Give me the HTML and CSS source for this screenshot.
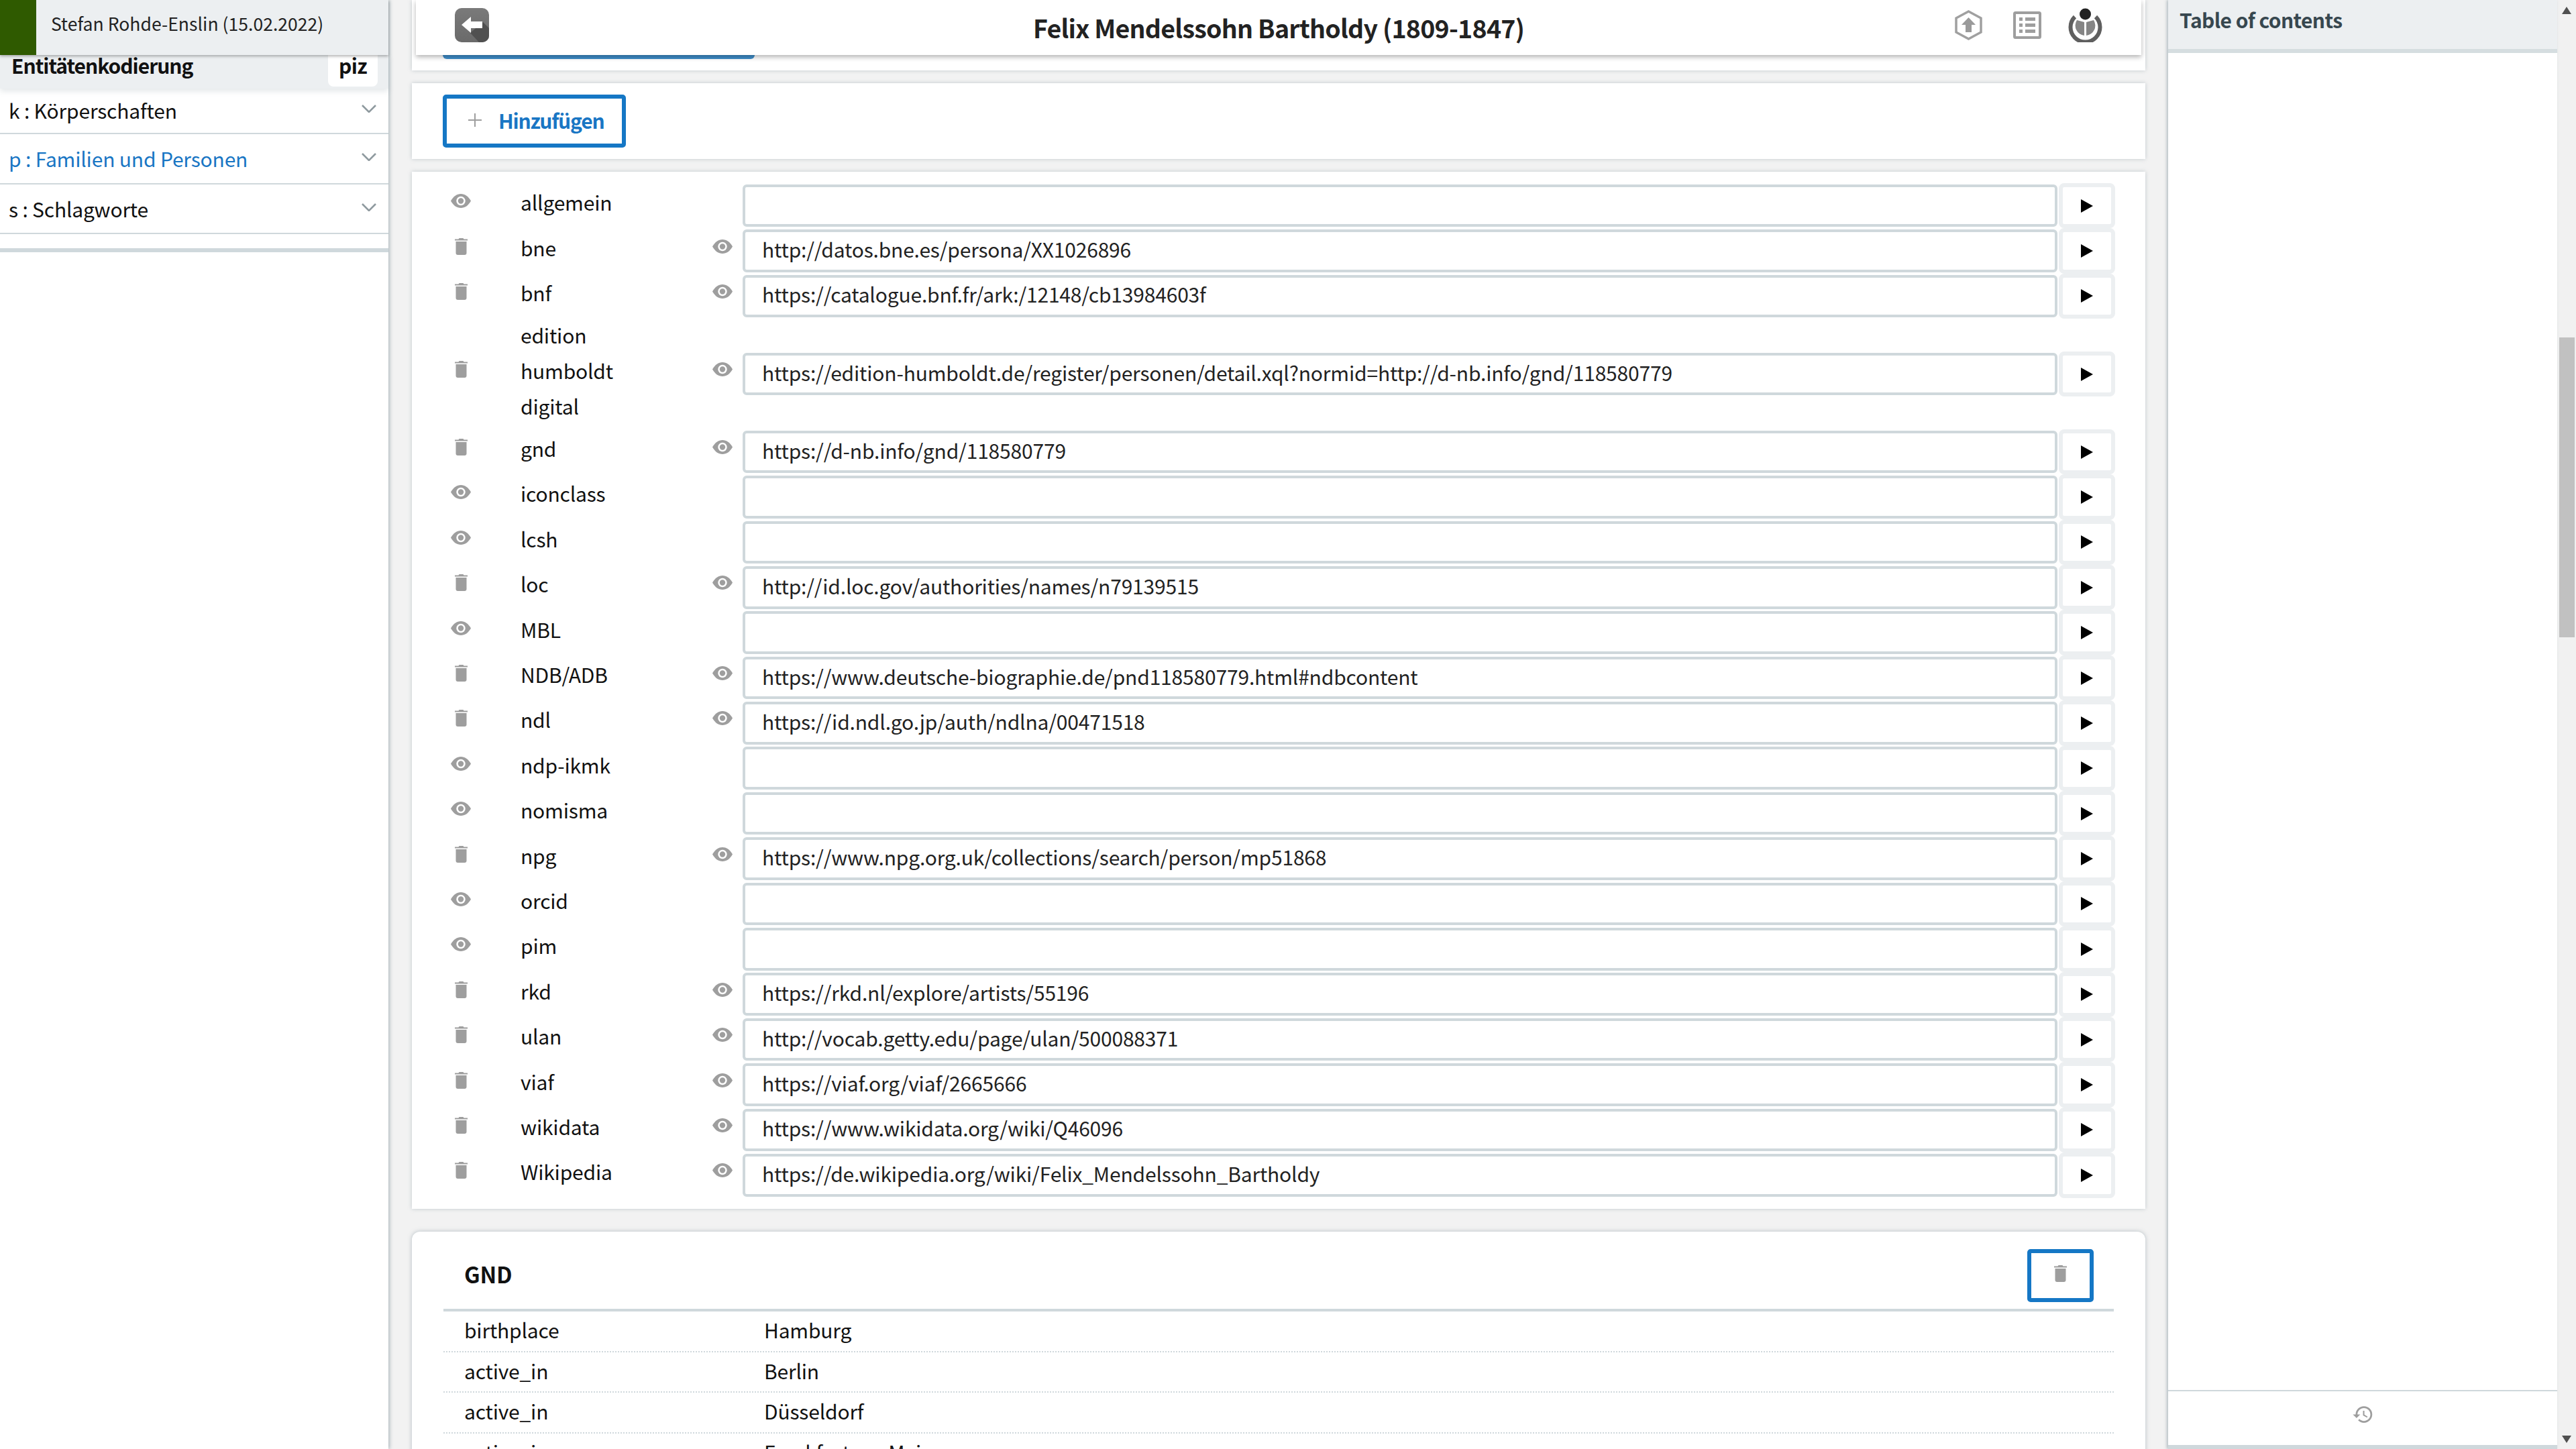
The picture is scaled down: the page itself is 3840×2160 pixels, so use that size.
FILE: index.html
```html
<!DOCTYPE html>
<html lang="de">
<head>
<meta charset="utf-8">
<title>Felix Mendelssohn Bartholdy (1809-1847)</title>
<link rel="stylesheet" href="styles.css">
</head>
<body>
<svg class="defs" aria-hidden="true">
  <symbol id="eye" viewBox="0 0 30 21"><path fill="#9e9e9e" d="M0 10.5C4 3.5 9 0 15 0s11 3.500 15 10.500C26 17.500 21 21 15 21S4 17.500 0 10.500z"/><circle cx="15" cy="10.500" r="6.700" fill="#fff"/><circle cx="15" cy="10.500" r="4.200" fill="#9e9e9e"/></symbol>
  <symbol id="trash" viewBox="0 0 19 25"><path fill="#9e9e9e" d="M6.500 0h6l1 1.500H19v2H0v-2h5.500zM1.500 5h16V22a3 3 0 0 1-3 3h-10a3 3 0 0 1-3-3z"/></symbol>
  <symbol id="chev" viewBox="0 0 22 12"><path fill="none" stroke="#8f9a9f" stroke-width="2.600" d="M1 1l10 10L21 1"/></symbol>
  <symbol id="play" viewBox="0 0 18 20"><path d="M0 0l18 10L0 20z"/></symbol>
</svg>
<div class="app">
  <aside class="left">
    <div class="user"><span class="user-mark"></span><span class="user-name">Stefan Rohde-Enslin (15.02.2022)</span></div>
    <div class="ent"><span class="ent-title">Entitätenkodierung</span><span class="ent-badge">piz</span></div>
    <div class="nav-item nav-first"><span>k : Körperschaften</span><svg class="chev"><use href="#chev"/></svg></div>
    <div class="nav-item nav-active"><span>p : Familien und Personen</span><svg class="chev"><use href="#chev"/></svg></div>
    <div class="nav-item"><span>s : Schlagworte</span><svg class="chev"><use href="#chev"/></svg></div>
    <div class="left-rule"></div>
  </aside>

  <main class="main">
    <section class="card card-top">
      <header class="topbar">
        <svg class="back" viewBox="0 0 51 51">
          <defs><linearGradient id="bk" x1="0" y1="0" x2="0" y2="1"><stop offset="0" stop-color="#7a7a7a"/><stop offset="1" stop-color="#6a6a6a"/></linearGradient></defs>
          <rect width="51" height="51" rx="10" fill="url(#bk)"/>
          <path fill="#505050" d="M23 37L42 21l9 9v11a10 10 0 0 1-10 10H36z"/>
          <path fill="#fff" d="M10 25L24 13v7h17v10H24v7z"/>
        </svg>
        <h1 class="title">Felix Mendelssohn Bartholdy (1809-1847)</h1>
        <div class="tools">
          <svg class="tool-hex" viewBox="0 0 41 45"><path fill="none" stroke="#a0a0a0" stroke-width="3.500" d="M20.500 2L39 12v21L20.500 43 2 33V12z"/><path fill="#9a9a9a" d="M20.500 11L31 22h-6v11h-9V22h-6z"/></svg>
          <svg class="tool-list" viewBox="0 0 42 41"><rect x="2" y="2" width="38" height="37" rx="1.500" fill="#fff" stroke="#9e9e9e" stroke-width="4"/><path fill="#9e9e9e" d="M9 9h5v5H9zM18 9h15v5H18zM9 18h5v5H9zM18 18h15v5H18zM9 27h5v5H9zM18 27h15v5H18z"/></svg>
          <svg class="tool-wm" viewBox="0 0 51 51"><circle cx="25.500" cy="9" r="8.500" fill="#222"/><path fill="none" stroke="#5f5f5f" stroke-width="6" d="M10 13A22 22 0 1 0 41 13"/><path fill="#858585" d="M24 21v20A15 15 0 0 1 13 18zM27 21v20A15 15 0 0 0 38 18z"/></svg>
        </div>
      </header>
      <div class="tab-bar"></div>
    </section>

    <section class="card card-add">
      <button class="add-btn"><span class="plus"></span>Hinzufügen</button>
    </section>

    <section class="card card-list">
      <div class="row"><svg class="ico-eye"><use href="#eye"/></svg><span class="lbl">allgemein</span><span></span><input class="url" readonly value=""><button class="go"><svg class="play"><use href="#play"/></svg></button></div>
      <div class="row"><svg class="ico-trash"><use href="#trash"/></svg><span class="lbl">bne</span><svg class="ico-eye"><use href="#eye"/></svg><input class="url" readonly value="http://datos.bne.es/persona/XX1026896"><button class="go"><svg class="play"><use href="#play"/></svg></button></div>
      <div class="row"><svg class="ico-trash"><use href="#trash"/></svg><span class="lbl">bnf</span><svg class="ico-eye"><use href="#eye"/></svg><input class="url" readonly value="https://catalogue.bnf.fr/ark:/12148/cb13984603f"><button class="go"><svg class="play"><use href="#play"/></svg></button></div>
      <div class="row row-tall"><svg class="ico-trash"><use href="#trash"/></svg><span class="lbl">edition<br>humboldt<br>digital</span><svg class="ico-eye"><use href="#eye"/></svg><input class="url" readonly value="https://edition-humboldt.de/register/personen/detail.xql?normid=http://d-nb.info/gnd/118580779"><button class="go"><svg class="play"><use href="#play"/></svg></button></div>
      <div class="row"><svg class="ico-trash"><use href="#trash"/></svg><span class="lbl">gnd</span><svg class="ico-eye"><use href="#eye"/></svg><input class="url" readonly value="https://d-nb.info/gnd/118580779"><button class="go"><svg class="play"><use href="#play"/></svg></button></div>
      <div class="row"><svg class="ico-eye"><use href="#eye"/></svg><span class="lbl">iconclass</span><span></span><input class="url" readonly value=""><button class="go"><svg class="play"><use href="#play"/></svg></button></div>
      <div class="row"><svg class="ico-eye"><use href="#eye"/></svg><span class="lbl">lcsh</span><span></span><input class="url" readonly value=""><button class="go"><svg class="play"><use href="#play"/></svg></button></div>
      <div class="row"><svg class="ico-trash"><use href="#trash"/></svg><span class="lbl">loc</span><svg class="ico-eye"><use href="#eye"/></svg><input class="url" readonly value="http://id.loc.gov/authorities/names/n79139515"><button class="go"><svg class="play"><use href="#play"/></svg></button></div>
      <div class="row"><svg class="ico-eye"><use href="#eye"/></svg><span class="lbl">MBL</span><span></span><input class="url" readonly value=""><button class="go"><svg class="play"><use href="#play"/></svg></button></div>
      <div class="row"><svg class="ico-trash"><use href="#trash"/></svg><span class="lbl">NDB/ADB</span><svg class="ico-eye"><use href="#eye"/></svg><input class="url" readonly value="https://www.deutsche-biographie.de/pnd118580779.html#ndbcontent"><button class="go"><svg class="play"><use href="#play"/></svg></button></div>
      <div class="row"><svg class="ico-trash"><use href="#trash"/></svg><span class="lbl">ndl</span><svg class="ico-eye"><use href="#eye"/></svg><input class="url" readonly value="https://id.ndl.go.jp/auth/ndlna/00471518"><button class="go"><svg class="play"><use href="#play"/></svg></button></div>
      <div class="row"><svg class="ico-eye"><use href="#eye"/></svg><span class="lbl">ndp-ikmk</span><span></span><input class="url" readonly value=""><button class="go"><svg class="play"><use href="#play"/></svg></button></div>
      <div class="row"><svg class="ico-eye"><use href="#eye"/></svg><span class="lbl">nomisma</span><span></span><input class="url" readonly value=""><button class="go"><svg class="play"><use href="#play"/></svg></button></div>
      <div class="row"><svg class="ico-trash"><use href="#trash"/></svg><span class="lbl">npg</span><svg class="ico-eye"><use href="#eye"/></svg><input class="url" readonly value="https://www.npg.org.uk/collections/search/person/mp51868"><button class="go"><svg class="play"><use href="#play"/></svg></button></div>
      <div class="row"><svg class="ico-eye"><use href="#eye"/></svg><span class="lbl">orcid</span><span></span><input class="url" readonly value=""><button class="go"><svg class="play"><use href="#play"/></svg></button></div>
      <div class="row"><svg class="ico-eye"><use href="#eye"/></svg><span class="lbl">pim</span><span></span><input class="url" readonly value=""><button class="go"><svg class="play"><use href="#play"/></svg></button></div>
      <div class="row"><svg class="ico-trash"><use href="#trash"/></svg><span class="lbl">rkd</span><svg class="ico-eye"><use href="#eye"/></svg><input class="url" readonly value="https://rkd.nl/explore/artists/55196"><button class="go"><svg class="play"><use href="#play"/></svg></button></div>
      <div class="row"><svg class="ico-trash"><use href="#trash"/></svg><span class="lbl">ulan</span><svg class="ico-eye"><use href="#eye"/></svg><input class="url" readonly value="http://vocab.getty.edu/page/ulan/500088371"><button class="go"><svg class="play"><use href="#play"/></svg></button></div>
      <div class="row"><svg class="ico-trash"><use href="#trash"/></svg><span class="lbl">viaf</span><svg class="ico-eye"><use href="#eye"/></svg><input class="url" readonly value="https://viaf.org/viaf/2665666"><button class="go"><svg class="play"><use href="#play"/></svg></button></div>
      <div class="row"><svg class="ico-trash"><use href="#trash"/></svg><span class="lbl">wikidata</span><svg class="ico-eye"><use href="#eye"/></svg><input class="url" readonly value="https://www.wikidata.org/wiki/Q46096"><button class="go"><svg class="play"><use href="#play"/></svg></button></div>
      <div class="row"><svg class="ico-trash"><use href="#trash"/></svg><span class="lbl">Wikipedia</span><svg class="ico-eye"><use href="#eye"/></svg><input class="url" readonly value="https://de.wikipedia.org/wiki/Felix_Mendelssohn_Bartholdy"><button class="go"><svg class="play"><use href="#play"/></svg></button></div>
    </section>

    <section class="card card-gnd">
      <div class="gnd-head"><h2 class="gnd-title">GND</h2><button class="del-btn"><svg class="ico-del"><use href="#trash"/></svg></button></div>
      <div class="kv"><span>birthplace</span><span>Hamburg</span></div>
      <div class="kv"><span>active_in</span><span>Berlin</span></div>
      <div class="kv"><span>active_in</span><span>Düsseldorf</span></div>
      <div class="kv"><span>active_in</span><span>Frankfurt am Main</span></div>
    </section>
  </main>

  <aside class="right">
    <div class="toc-head">Table of contents</div>
    <div class="toc-rule"></div>
    <div class="toc-body"></div>
    <div class="toc-foot">
      <svg class="history" viewBox="0 0 24 24"><path fill="#9e9e9e" d="M13 3a9 9 0 0 0-9 9H1l3.890 3.890.07.140L9 12H6c0-3.870 3.130-7 7-7s7 3.130 7 7-3.130 7-7 7c-1.930 0-3.680-.79-4.940-2.060l-1.420 1.420A8.954 8.954 0 0 0 13 21a9 9 0 0 0 0-18zm-1 5v5l4.280 2.540.72-1.210-3.500-2.080V8H12z"/></svg>
    </div>
    <div class="toc-end"></div>
  </aside>

  <div class="scrollbar">
    <span class="arrow-up"></span>
    <span class="thumb"></span>
    <span class="arrow-down"></span>
  </div>
</div>
</body>
</html>
```

FILE: styles.css
```css
* { box-sizing: border-box; }
html, body { margin: 0; height: 100%; overflow: hidden; }
body {
  font-family: "Noto Sans CJK SC", "Noto Sans", sans-serif;
  font-size: 30px;
  letter-spacing: -.18px;
  color: #111;
  background: #f2f2f2;
}
.defs { width: 0; height: 0; position: absolute; }
.app { display: flex; height: 2160px; overflow: hidden; }

/* left */
.left {
  width: 579px; flex: none; background: #fff;
  box-shadow: 2px 0 5px rgba(120, 140, 150, .55);
  position: relative; z-index: 2;
}
.user {
  height: 82px; display: flex; align-items: center; background: #eceff1;
  box-shadow: 0 2px 4px rgba(0, 0, 0, .3); position: relative; z-index: 2;
}
.user-mark { width: 54px; height: 82px; background: #2f5a00; }
.user-name { margin-left: 22px; align-self: flex-start; font-size: 26.500px; line-height: 69px; color: #222; letter-spacing: .04px; }
.ent {
  height: 50px; display: flex; justify-content: space-between; background: #eceff1;
  padding: 0 16px 0 17px; box-shadow: 0 4px 8px rgba(120, 140, 150, .2);
  position: relative; z-index: 1;
}
.ent-title { font-weight: 700; font-size: 30px; letter-spacing: -1px; line-height: 31px; }
.ent-badge {
  width: 74px; height: 47px; background: #fff; border-radius: 0 0 8px 8px;
  font-weight: 700; text-align: center; font-size: 30px; letter-spacing: -.6px; line-height: 31px;
}
.nav-item {
  height: 74.500px; display: flex; justify-content: space-between; align-items: center;
  padding: 0 18px 0 13px; border-bottom: 2px solid #cfd8dc; line-height: 50px;
  letter-spacing: -.18px;
}
.nav-first { height: 68px; padding-bottom: 2px; }
.nav-active { color: #1976c4; }
.chev { width: 22px; height: 12px; margin-bottom: 4px; }
.left-rule { height: 6px; margin-top: 21px; background: #cfd8dc; }

/* main */
.main { width: 2653px; flex: none; padding: 0 34px 0 35px; overflow: hidden; }
.card { background: #fff; box-shadow: 0 0 6px rgba(120, 140, 150, .4); }
.card-top { height: 105px; }
.topbar {
  height: 82px; margin: 0 6px; padding: 0 58px 0 58px; display: grid; grid-template-columns: 1fr auto 1fr; align-items: center;
  background: #fff;
  box-shadow: 0 3px 7px rgba(0, 0, 0, .3); position: relative; z-index: 1;
}
.back { width: 51px; height: 51px; margin-bottom: 7px; }
.title { margin: 0; font-size: 37.500px; letter-spacing: -.74px; font-weight: 600; line-height: 60px; color: #222; }
.tools { display: flex; align-items: center; justify-content: flex-end; gap: 40px; margin-bottom: 8px; }
.tool-hex { width: 41px; height: 45px; margin-right: 6px; }
.tool-list { width: 42px; height: 41px; }
.tool-wm { width: 51px; height: 51px; }
.tab-bar { width: 465px; height: 6px; margin-left: 46px; background: #3f8fcc; border-radius: 0 0 6px 6px; }

.card-add { margin-top: 19px; height: 113px; padding: 17px 46px 0; }
.add-btn {
  width: 273px; height: 79px; padding: 0 0 4px 32px; display: flex; align-items: center;
  background: #fff; border: 6px solid #1577c5; border-radius: 5px; color: #1976c4;
  font: 600 30px "Noto Sans CJK SC", "Noto Sans", sans-serif; letter-spacing: -1.200px;
}
.plus {
  width: 20px; height: 20px; margin-right: 25px;
  background: linear-gradient(#9e9e9e, #9e9e9e) center / 2px 100% no-repeat,
              linear-gradient(#9e9e9e, #9e9e9e) center / 100% 2px no-repeat;
}

.card-list { margin-top: 18.500px; padding: 17.500px 45px 16.600px 46px; }
.row {
  display: grid; grid-template-columns: 54px 336px 57px 1960px 84px;
  column-gap: 0; min-height: 67.400px; align-items: center; justify-items: start;
}
.row-tall { min-height: 164.700px; }
.ico-eye { width: 30px; height: 21px; margin: 0 0 14px 12px; }
.ico-trash { width: 19px; height: 25px; margin: 0 0 14px 17.500px; }
.lbl { margin: -4px 0 6px; padding-left: 62px; line-height: 53px; }
.url {
  width: 100%; height: 63.600px; padding: 0 25px 6px; border: 4px solid #cfd8dc; border-radius: 6px;
  font: 400 30px "Noto Sans CJK SC", "Noto Sans", sans-serif; letter-spacing: -.18px; color: #222; background: #fff; outline: 0;
}
.go {
  width: 84px; height: 67.400px; margin-left: 2px; padding: 0; display: flex; align-items: center; justify-content: center;
  background: #fff; border: 6px solid #eceff1; border-radius: 8px;
}
.play { width: 18px; height: 20px; fill: #000; }

.card-gnd {
  margin-top: 34px; height: 340px; padding: 26px 47px 0; border-radius: 12px 12px 0 0;
  box-shadow: 0 0 6px rgba(120, 140, 150, .5);
}
.gnd-head {
  height: 93px; padding: 0 30px 10px 31px; display: flex; justify-content: space-between; align-items: center;
  border-bottom: 4px solid #cfd8dc;
}
.gnd-title { margin: 0 0 5px; font-size: 33px; font-weight: 700; line-height: 50px; }
.del-btn {
  width: 99px; height: 79px; padding: 0; display: flex; align-items: center; justify-content: center;
  background: #fff; border: 6px solid #1577c5; border-radius: 5px;
}
.ico-del { width: 19px; height: 25px; margin-bottom: 7px; }
.kv {
  height: 60.700px; padding: 0 0 5px 31px; display: grid; grid-template-columns: 447px 1fr; align-items: center;
  border-bottom: 2px dotted #cfd8dc; line-height: 50px;
}

/* right */
.right {
  width: 580px; flex: none; display: flex; flex-direction: column; background: #fff;
  box-shadow: -2px 0 4px rgba(120, 140, 150, .5); position: relative;
}
.toc-head {
  height: 73px; padding: 0 0 15px 17px; display: flex; align-items: center; background: #eceff1;
  font-weight: 600; color: #37474f; font-size: 30px; letter-spacing: -.6px;
}
.toc-rule { height: 6px; background: #d5dde0; }
.toc-body { flex: 1; }
.toc-foot {
  height: 82px; display: flex; justify-content: center; align-items: center; border-top: 2px solid #cfd8dc;
}
.history { width: 33px; height: 33px; margin-bottom: 12px; }
.toc-end { height: 6px; background: #cfd8dc; }

.scrollbar {
  width: 28px; flex: none; display: flex; flex-direction: column; align-items: center; background: #f1f1f1;
}
.arrow-up {
  margin-top: 10px; border: 7px solid transparent; border-top: 0; border-bottom: 11px solid #505050;
}
.thumb { width: 23px; height: 447px; margin-top: 482px; background: #c1c1c1; }
.arrow-down {
  margin-top: auto; margin-bottom: 9px; border: 7px solid transparent; border-bottom: 0; border-top: 11px solid #505050;
}
```
